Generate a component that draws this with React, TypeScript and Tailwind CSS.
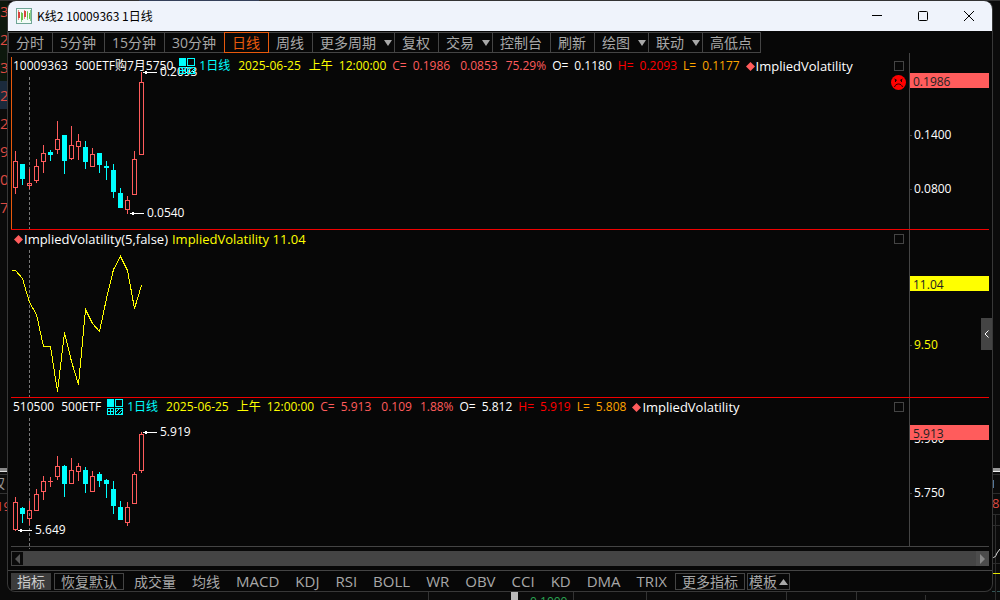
import type { ReactNode } from 'react';

type Candle = { up: boolean; high: number; top: number; bottom: number; low: number };
type Callout = { x: number; y: number; text: string };
type Quote = {
  code: string;
  name: string;
  close: string;
  change: string;
  percent: string;
  open: string;
  high: string;
  low: string;
};

const FIRST_X = 4;
const STEP = 7;

const up = (high: number, top: number, bottom: number, low: number): Candle => ({ up: true, high, top, bottom, low });
const down = (high: number, top: number, bottom: number, low: number): Candle => ({ up: false, high, top, bottom, low });

const OPTION_CANDLES: Candle[] = [
  up(98, 108, 135, 141),
  down(111, 111, 126, 132),
  up(116, 130, 133, 136),
  up(106, 113, 128, 130),
  up(92, 100, 109, 120),
  down(97, 99, 102, 108),
  up(68, 86, 97, 101),
  down(82, 82, 108, 121),
  up(73, 92, 106, 107),
  up(81, 88, 94, 107),
  down(88, 94, 109, 116),
  up(95, 101, 114, 114),
  down(100, 100, 112, 120),
  down(108, 113, 115, 127),
  down(111, 117, 139, 145),
  down(135, 140, 155, 155),
  up(143, 147, 157, 161),
  up(98, 106, 142, 142),
  up(19, 29, 102, 102),
];

const ETF_CANDLES: Candle[] = [
  up(99, 104, 132, 133),
  down(109, 110, 116, 125),
  up(103, 112, 121, 127),
  up(91, 96, 113, 113),
  up(78, 83, 94, 102),
  up(79, 83, 84, 89),
  up(58, 68, 79, 82),
  down(67, 68, 86, 99),
  up(60, 72, 86, 86),
  up(65, 68, 74, 83),
  down(69, 72, 86, 95),
  up(73, 78, 94, 94),
  down(74, 76, 83, 89),
  down(81, 82, 86, 100),
  down(83, 91, 108, 116),
  down(103, 109, 122, 122),
  up(104, 109, 125, 128),
  up(74, 76, 106, 106),
  up(34, 36, 73, 75),
];

const VOLATILITY = '0,40 4,40 11,48 18,72 25,84 32,116 39,116 46,161 53,102 60,131 67,154 74,79 81,93 88,101 95,68 102,39 109,26 116,40 123,78 130,55';

const PERIODS = [
  { label: '分时' },
  { label: '5分钟' },
  { label: '15分钟' },
  { label: '30分钟' },
  { label: '日线', active: true },
  { label: '周线' },
  { label: '更多周期', menu: true },
  { label: '复权' },
  { label: '交易', menu: true },
  { label: '控制台' },
  { label: '刷新' },
  { label: '绘图', menu: true },
  { label: '联动', menu: true },
  { label: '高低点' },
];

const PATTERNS = ['成交量', '均线'];
const INDICATORS = ['MACD', 'KDJ', 'RSI', 'BOLL', 'WR', 'OBV', 'CCI', 'KD', 'DMA', 'TRIX'];

const OPTION_QUOTE: Quote = {
  code: '10009363',
  name: '500ETF购7月5750',
  close: '0.1986',
  change: '0.0853',
  percent: '75.29%',
  open: '0.1180',
  high: '0.2093',
  low: '0.1177',
};

const ETF_QUOTE: Quote = {
  code: '510500',
  name: '500ETF',
  close: '5.913',
  change: '0.109',
  percent: '1.88%',
  open: '5.812',
  high: '5.919',
  low: '5.808',
};

function AppIcon() {
  return (
    <svg width="16" height="16" viewBox="0 0 16 16" shapeRendering="crispEdges" aria-hidden="true">
      <rect x="0.5" y="0.5" width="15" height="15" fill="#f3fbf7" stroke="#6fa596" />
      <path d="M2.5 2v10M8.5 2v9" stroke="#e88" />
      <path d="M5.5 4v10M11.5 3v9M14.5 2v11" stroke="#8c8" />
      <path d="M2 4h2v6H2zM8 3h2v6H8z" fill="#d9433f" />
      <path d="M5 5h2v7H5zM11 4h1v6h-1zM13 5h1v6h-1z" fill="#6cc04a" />
    </svg>
  );
}

function GridIcon() {
  return (
    <svg width="16" height="16" viewBox="0 0 16 16" fill="none" stroke="#00ffff" shapeRendering="crispEdges" aria-hidden="true">
      <rect x="0" y="0" width="7" height="8" fill="#00ffff" stroke="none" />
      <rect x="8.5" y="0.5" width="7" height="7" />
      <path d="M0.5 9.5h6v6h-6zM3.5 9v7M0 12.5h7" />
      <path d="M8.5 9.5h7v6h-7z" />
      <path d="M9 13l4-4M10 16l6-6M13 16l3-3" />
    </svg>
  );
}

function Diamond() {
  return (
    <svg width="9" height="9" viewBox="0 0 9 9" aria-hidden="true">
      <path d="M4.5 0L9 4.5L4.5 9L0 4.5z" fill="#ff5c5c" />
    </svg>
  );
}

function FrownIcon() {
  return (
    <svg width="15" height="15" viewBox="0 0 15 15" aria-hidden="true">
      <circle cx="7.5" cy="7.5" r="7.5" fill="#ff0000" />
      <g stroke="#200" fill="none">
        <path d="M3.5 4l2.5 1.5M11.5 4L9 5.5" />
        <path d="M4.5 5v2M10.5 5v2" />
        <path d="M3.5 12C4.5 8 10.5 8 11.5 12" />
      </g>
    </svg>
  );
}

function Candles({ data }: { data: Candle[] }) {
  return (
    <g>
      {data.map((c, i) => {
        const x = FIRST_X + i * STEP;
        const color = c.up ? '#ff5c5c' : '#00ffff';
        return (
          <g key={i} fill={color}>
            <rect x={x} y={c.high} width="1" height={c.top - c.high} />
            <rect x={x} y={c.bottom} width="1" height={c.low - c.bottom} />
            {c.up && c.bottom - c.top > 1 ? (
              <rect x={x - 1.5} y={c.top + 0.5} width="4" height={c.bottom - c.top - 1} fill="none" stroke={color} />
            ) : (
              <rect x={x - 2} y={c.top} width="5" height={c.bottom - c.top} />
            )}
          </g>
        );
      })}
    </g>
  );
}

function Callouts({ items }: { items: Callout[] }) {
  return (
    <g fill="#fff">
      {items.map((c) => (
        <g key={c.text}>
          <path d={`M${c.x} ${c.y}h14v1h-14zM${c.x + 2} ${c.y - 1}h2v3h-2z`} />
          <text x={c.x + 17} y={c.y + 4} fontSize="12">{c.text}</text>
        </g>
      ))}
    </g>
  );
}

function PriceTag({ y, value, color }: { y: number; value: string; color: string }) {
  return (
    <g>
      <rect x="0" y={y} width="100%" height="15" fill={color} />
      <text x="3" y={y + 13} fill="#222">{value}</text>
    </g>
  );
}

function AxisLabel({ y, value, color = '#fff' }: { y: number; value: string; color?: string }) {
  return (
    <g>
      <rect x="0" y={y} width="2" height="1" fill="#444" />
      <text x="4" y={y + 4} fill={color}>{value}</text>
    </g>
  );
}

function QuoteLine({ quote }: { quote: Quote }) {
  return (
    <>
      <span>{quote.code}</span>
      <span className="ml-[7px]">{quote.name}</span>
      <span className="ml-1.5"><GridIcon /></span>
      <span className="ml-1 text-[#00ffff]">1日线</span>
      <span className="ml-2 text-[#ffff00]">2025-06-25</span>
      <span className="ml-2 text-[#ffff00]">上午</span>
      <span className="ml-1.5 text-[#ffff00]">12:00:00</span>
      <span className="ml-1.5 text-[#ff5c5c]">C=</span>
      <span className="ml-1.5 text-[#ff5c5c]">{quote.close}</span>
      <span className="ml-2.5 text-[#ff5c5c]">{quote.change}</span>
      <span className="ml-2 text-[#ff5c5c]">{quote.percent}</span>
      <span className="ml-1.5">O=</span>
      <span className="ml-1.5">{quote.open}</span>
      <span className="ml-1.5 text-[#ff0000]">H=</span>
      <span className="ml-1.5 text-[#ff0000]">{quote.high}</span>
      <span className="ml-1.5 text-[#ffa500]">L=</span>
      <span className="ml-1.5 text-[#ffa500]">{quote.low}</span>
      <span className="ml-1.5"><Diamond /></span>
      <span className="ml-px text-[13px]">ImpliedVolatility</span>
    </>
  );
}

type PanelProps = {
  className: string;
  headerClassName: string;
  header: ReactNode;
  plot: ReactNode;
  axis: ReactNode;
  badge?: ReactNode;
};

function Panel({ className, headerClassName, header, plot, axis, badge }: PanelProps) {
  return (
    <section className={`flex border-b ${className}`}>
      <div className="relative min-w-0 flex-1">
        <svg className="absolute inset-0 h-full w-full overflow-visible" shapeRendering="crispEdges">
          {plot}
        </svg>
        <div className={`relative flex items-start pr-[5px] ${headerClassName}`}>
          <div className="flex h-2.5 flex-1 items-center whitespace-nowrap pl-0.5 text-[12px] leading-[10px]">
            {header}
          </div>
          <button aria-label="最大化" className="size-2.5 border border-[#444]" />
        </div>
        {badge && <div className="relative flex justify-end pr-[3px] pt-1">{badge}</div>}
      </div>
      <div className="w-20 border-l border-[#444]">
        <svg className="block h-full w-full" fontSize="12">
          {axis}
        </svg>
      </div>
    </section>
  );
}

// Parts of the main terminal that stick out around the floating window.
function Backdrop() {
  return (
    <svg className="absolute inset-0 h-full w-full" fontSize="15" aria-hidden="true">
      <rect width="8" height="81" fill="#0d180d" />
      <rect y="81" width="8" height="28" fill="#1b2a3c" />
      <rect width="100%" height="1" fill="#333" />
      <rect x="139" width="120" height="1" fill="#34405a" />
      <g fill="#dd4a42">
        {['3', '2', '3', '2', '2', '9', '0', '7'].map((n, i) => (
          <text key={i} x="0" y={17 + i * 28}>{n}</text>
        ))}
        <text x="-4" y="511" fontSize="13">19</text>
      </g>
      <rect y="468" width="8" height="4" fill="#888" />
      <rect y="471" width="8" height="1" fill="#ddd" />
      <path d="M0 474.5h8M0 493.5h8" stroke="#333" />
      <text x="-9" y="488" fontSize="14" fill="#999">权</text>
      <svg x="100%" overflow="visible">
        <rect x="-8" y="468" width="8" height="4" fill="#999" />
        <rect x="-8" y="471" width="8" height="1" fill="#eee" />
        <path d="M-8 474.5h8M-8 493.5h8M-8 514.5h8M-8 525.5h8M-8 563.5h8M-4.5 515v85" stroke="#2c2c2c" />
        <rect x="-7" y="480" width="1" height="8" fill="#579" />
        <text x="-8" y="508" fontSize="13" fill="#dd4a42">8</text>
        <path d="M-8 557q3 2 5 -4l3 -4" fill="none" stroke="#ddd" />
        <rect x="-8" y="573" width="8" height="1" fill="#e5e500" />
        <path d="M-8 591.5h8" stroke="#355" strokeDasharray="3 2" />
      </svg>
      <path d="M428.5 592v8M573.5 592v8M646.5 592v8M786.5 592v8M856.5 592v8M925.5 595v5" stroke="#333" />
      <rect x="511" y="592" width="7" height="8" fill="#bbb" />
      <text x="530" y="606" fontSize="12" fill="#2aa552">0.1000</text>
    </svg>
  );
}

function TitleBar() {
  return (
    <header className="flex h-[30px] items-center rounded-t-lg bg-[#eff3fb] pl-2 text-black">
      <AppIcon />
      <h1 className="ml-[5px] flex-1 font-['Noto_Sans_CJK_SC',sans-serif] text-[12px] leading-4">K线2 10009363 1日线</h1>
      <button aria-label="最小化" className="flex h-full w-[46px] items-center justify-center">
        <svg width="10" height="10" shapeRendering="crispEdges"><path d="M0 4.5h10" stroke="#000" /></svg>
      </button>
      <button aria-label="最大化" className="flex h-full w-[46px] items-center justify-center">
        <svg width="10" height="10" fill="none"><rect x="0.5" y="0.5" width="9" height="9" rx="1" stroke="#000" /></svg>
      </button>
      <button aria-label="关闭" className="flex h-full w-[46px] items-center justify-center">
        <svg width="10" height="10"><path d="M0 0l10 10M10 0L0 10" stroke="#000" /></svg>
      </button>
    </header>
  );
}

function PeriodBar() {
  return (
    <nav className="mt-px flex text-[14px] leading-[19px] text-[#a8a8a8]">
      {PERIODS.map((p, i) => (
        <button
          key={p.label}
          className={`flex items-center whitespace-nowrap border py-0 pl-[7px] ${i > 0 ? '-ml-px' : ''} ${p.menu ? 'gap-2 pr-0.5' : 'pr-2'} ${p.active ? 'relative border-[#e8590c] text-[#e8590c]' : 'border-[#444]'}`}
        >
          {p.label}
          {p.menu && (
            <svg width="8" height="6" aria-hidden="true"><path d="M0 0h8L4 6z" fill="#a8a8a8" /></svg>
          )}
        </button>
      ))}
    </nav>
  );
}

function ScrollBar() {
  return (
    <div className="mx-[3px] mt-1 flex h-[15px] bg-[#444]">
      <button aria-label="向左" className="flex w-[13px] items-center justify-center border border-[#444] bg-[#0a0a0a]">
        <svg width="5" height="10"><path d="M5 0v10L0 5z" fill="#555" /></svg>
      </button>
      <div className="flex-1" />
      <button aria-label="向右" className="flex w-[13px] items-center justify-center bg-[#4c4c4c]">
        <svg width="5" height="10"><path d="M0 0v10L5 5z" fill="#888" /></svg>
      </button>
    </div>
  );
}

function IndicatorBar() {
  return (
    <nav className="mt-1 flex items-center border-t border-[#444] pb-px pl-[3px] pt-0.5 text-[14px] leading-[15px] text-[#a8a8a8]">
      <button className="h-[17px] bg-[#3c3c3c] px-1.5 text-[#ccc]">指标</button>
      <button className="ml-[3px] h-[17px] border border-[#444] px-1.5">恢复默认</button>
      <div className="ml-2.5 flex gap-4">
        {PATTERNS.map((name) => (
          <button key={name} className="whitespace-nowrap">{name}</button>
        ))}
        {INDICATORS.map((name) => (
          <button key={name} className="whitespace-nowrap text-[15px]">{name}</button>
        ))}
      </div>
      <button className="ml-2 h-[17px] whitespace-nowrap border border-[#444] px-1.5">更多指标</button>
      <button className="ml-0.5 flex h-[17px] items-center gap-0.5 whitespace-nowrap border border-[#444] px-px">
        模板
        <svg width="9" height="6" aria-hidden="true"><path d="M0 6h9L4.5 0z" fill="#a8a8a8" /></svg>
      </button>
    </nav>
  );
}

export default function App() {
  return (
    <div className="relative min-h-screen overflow-hidden bg-[#0b0b0b] font-['Open_Sans','Noto_Sans_CJK_SC',sans-serif] text-white">
      <Backdrop />
      <main className="relative mx-[7px] mt-px rounded-lg border-x border-b border-[#383838] bg-[#070707]">
        <TitleBar />
        <PeriodBar />
        <div className="px-[3px]">
          <Panel
            className="h-[177px] border-[#f00000]"
            headerClassName="pt-2"
            header={<QuoteLine quote={OPTION_QUOTE} />}
            badge={<FrownIcon />}
            plot={
              <>
                <path d="M0.5 4v172" stroke="#e8590c" />
                <path d="M18.5 24v152" stroke="#777" strokeDasharray="3 2" />
                <Candles data={OPTION_CANDLES} />
                <Callouts items={[{ x: 132, y: 19, text: '0.2093' }, { x: 119, y: 160, text: '0.0540' }]} />
              </>
            }
            axis={
              <>
                <AxisLabel y={82} value="0.1400" />
                <AxisLabel y={136} value="0.0800" />
                <PriceTag y={20} value="0.1986" color="#ff5c5c" />
              </>
            }
          />
          <Panel
            className="h-[168px] border-[#f00000]"
            headerClassName="pt-1"
            header={
              <div className="flex items-center pl-px text-[13px]">
                <Diamond />
                <span className="ml-px">ImpliedVolatility(5,false)</span>
                <span className="ml-1 text-[#ffff00]">ImpliedVolatility 11.04</span>
              </div>
            }
            plot={
              <>
                <path d="M18.5 20v147" stroke="#777" strokeDasharray="3 2" />
                <polyline points={VOLATILITY} transform="translate(0.5 0.5)" fill="none" stroke="#ffff00" />
              </>
            }
            axis={
              <>
                <AxisLabel y={115} value="9.50" color="#ffff00" />
                <PriceTag y={46} value="11.04" color="#ffff00" />
              </>
            }
          />
          <Panel
            className="h-[149px] border-[#444]"
            headerClassName="pt-1"
            header={<QuoteLine quote={ETF_QUOTE} />}
            plot={
              <>
                <path d="M18.5 20v131" stroke="#777" strokeDasharray="3 2" />
                <Candles data={ETF_CANDLES} />
                <Callouts items={[{ x: 132, y: 34, text: '5.919' }, { x: 7, y: 132, text: '5.649' }]} />
              </>
            }
            axis={
              <>
                <AxisLabel y={41} value="5.900" />
                <AxisLabel y={95} value="5.750" />
                <PriceTag y={27} value="5.913" color="#ff5c5c" />
              </>
            }
          />
        </div>
        <ScrollBar />
        <IndicatorBar />
        <button aria-label="展开" className="absolute right-0 top-[317px] flex h-8 w-[11px] items-center justify-center bg-[#444]">
          <svg width="5" height="8" fill="none"><path d="M4.5 0.5L1 4l3.5 3.5" stroke="#fff" /></svg>
        </button>
      </main>
    </div>
  );
}
